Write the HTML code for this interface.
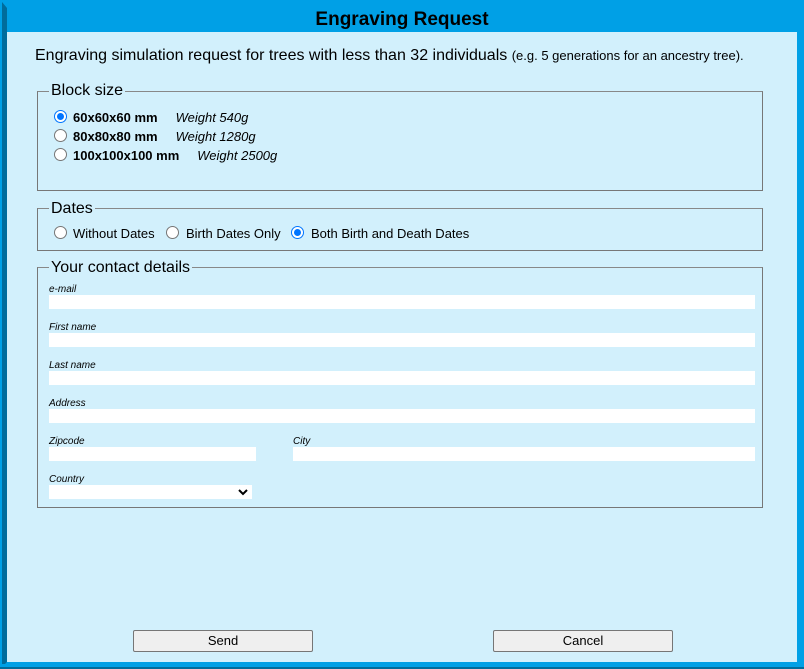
<html><head><style>
body{margin:0;width:804px;height:669px;overflow:hidden;font-family:"Liberation Sans",Arial,sans-serif;}
.a{position:absolute}
#f{position:absolute;left:0;top:0;width:804px;height:669px;background:#d2f0fc;}
.fs{position:absolute;border:1px solid #777;border-top-color:#888;}
.lg{position:absolute;background:#d2f0fc;font-size:16px;padding:0 2px;color:#000}
.r{position:absolute;width:11px;height:11px;border:1px solid #767676;border-radius:50%;background:#fff}
.r.on{border-color:#0075ff;}
.r.on:after{content:"";position:absolute;left:2px;top:2px;width:7px;height:7px;border-radius:50%;background:#0075ff}
.t{position:absolute;font-size:13px;white-space:nowrap}
.t i{margin-left:18px}
.lab{position:absolute;font-size:10px;font-style:italic;color:#000}
.in{position:absolute;background:#fff;height:14px}
.btn{position:absolute;width:178px;height:20px;border:1px solid #767676;border-radius:2px;background:#efefef;font-size:13px;text-align:center;line-height:20px}
</style></head><body>
<div id="f">
<div class="a" style="left:0;top:0;width:804px;height:669px;box-sizing:border-box;border:2px solid #00a0e6;"></div>
<div class="a" style="left:2px;top:2px;width:800px;height:665px;box-sizing:border-box;border-left:5px solid #006c9c;border-top:6px solid #00a0e6;border-right:5px solid #00a0e6;border-bottom:5px solid #00a0e6;"></div>
<div class="a" style="left:0;top:0;width:804px;height:2px;background:#00a0e6"></div>
<div class="a" style="left:0;top:664px;width:804px;height:5px;background:#00a0e6;border-bottom:2px solid #006c9c;box-sizing:border-box"></div>
<div class="a" style="left:7px;top:8px;width:790px;height:24px;background:#00a0e6;text-align:center;font-weight:bold;font-size:19px;line-height:24px">Engraving Request</div>
<div class="t" style="left:35px;top:47px;font-size:16px">Engraving simulation request for trees with less than 32 individuals <span style="font-size:13px">(e.g. 5 generations for an ancestry tree).</span></div>

<div class="fs" style="left:37px;top:91px;width:724px;height:98px"></div>
<div class="lg" style="left:49px;top:82px">Block size</div>
<div class="r on" style="left:54px;top:110px"></div><div class="t" style="left:73px;top:110px"><b>60x60x60 mm</b><i>Weight 540g</i></div>
<div class="r" style="left:54px;top:129px"></div><div class="t" style="left:73px;top:129px"><b>80x80x80 mm</b><i>Weight 1280g</i></div>
<div class="r" style="left:54px;top:148px"></div><div class="t" style="left:73px;top:148px"><b>100x100x100 mm</b><i>Weight 2500g</i></div>

<div class="fs" style="left:37px;top:208px;width:724px;height:41px"></div>
<div class="lg" style="left:49px;top:200px">Dates</div>
<div class="r" style="left:54px;top:226px"></div><div class="t" style="left:73px;top:226px">Without Dates</div>
<div class="r" style="left:166px;top:226px"></div><div class="t" style="left:186px;top:226px">Birth Dates Only</div>
<div class="r on" style="left:291px;top:226px"></div><div class="t" style="left:311px;top:226px">Both Birth and Death Dates</div>

<div class="fs" style="left:37px;top:267px;width:724px;height:239px"></div>
<div class="lg" style="left:49px;top:259px">Your contact details</div>
<div class="lab" style="left:49px;top:284px">e-mail</div><div class="in" style="left:49px;top:295px;width:706px"></div>
<div class="lab" style="left:49px;top:322px">First name</div><div class="in" style="left:49px;top:333px;width:706px"></div>
<div class="lab" style="left:49px;top:360px">Last name</div><div class="in" style="left:49px;top:371px;width:706px"></div>
<div class="lab" style="left:49px;top:398px">Address</div><div class="in" style="left:49px;top:409px;width:706px"></div>
<div class="lab" style="left:49px;top:436px">Zipcode</div><div class="in" style="left:49px;top:447px;width:207px"></div>
<div class="lab" style="left:293px;top:436px">City</div><div class="in" style="left:293px;top:447px;width:462px"></div>
<div class="lab" style="left:49px;top:474px">Country</div><div class="in" style="left:49px;top:485px;width:203px"><svg class="a" style="left:189px;top:4px" width="10" height="7"><path d="M1 1l4 4 4-4" stroke="#000" stroke-width="2" fill="none"/></svg></div>

<div class="btn" style="left:133px;top:630px">Send</div>
<div class="btn" style="left:493px;top:630px">Cancel</div>
</div>
</body></html>
